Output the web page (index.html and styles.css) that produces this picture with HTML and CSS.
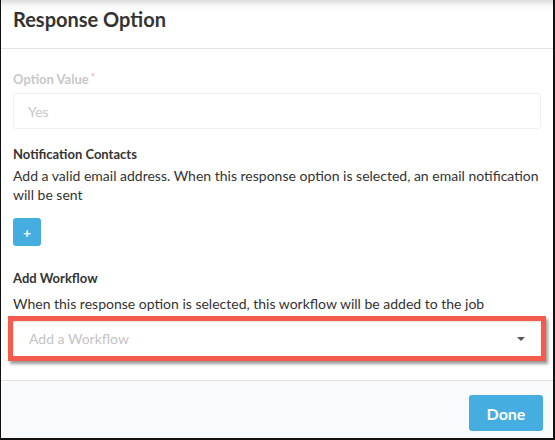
FILE: index.html
```html
<!DOCTYPE html>
<html lang="en">
<head>
<meta charset="utf-8">
<title>Response Option</title>
<link rel="stylesheet" href="styles.css">
</head>
<body>
<div class="modal">
  <header class="modal-header">
    <h2 class="modal-title">Response Option</h2>
  </header>
  <main class="modal-body">
    <div class="field">
      <label class="field-label is-disabled">Option Value<span class="req">*</span></label>
      <div class="text-input is-disabled">Yes</div>
    </div>
    <div class="field">
      <div class="section-label">Notification Contacts</div>
      <p class="section-help">Add a valid email address. When this response option is selected, an email notification will be sent</p>
      <button class="btn-add" type="button">+</button>
    </div>
    <div class="field workflow">
      <div class="section-label">Add Workflow</div>
      <p class="section-help">When this response option is selected, this workflow will be added to the job</p>
      <div class="select highlighted">
        <span class="select-placeholder">Add a Workflow</span>
        <span class="select-caret"></span>
      </div>
    </div>
  </main>
  <footer class="modal-footer">
    <button class="btn-primary" type="button">Done</button>
  </footer>
</div>
</body>
</html>
```
FILE: styles.css
```css
* { box-sizing: border-box; }

html, body {
  margin: 0;
  padding: 0;
  background: #fff;
}

body {
  font-family: Lato, "Open Sans", Arial, sans-serif;
  color: #333;
}

.modal {
  width: 555px;
  height: 440px;
  display: flex;
  flex-direction: column;
  border-left: 1px solid #111;
  border-right: 2px solid #111;
  border-bottom: 2px solid #111;
  background: #fff;
  overflow: hidden;
}

.modal-header {
  height: 49px;
  padding: 7px 12px 0;
  border-bottom: 1px solid #e3e3e3;
  background: linear-gradient(to bottom, #dcdcdc 0, #f4f4f4 5px, #fff 11px);
}

.modal-title {
  margin: 0;
  font-size: 20px;
  line-height: 24px;
  font-weight: 700;
  color: #333;
}

.modal-body {
  flex: 1;
  padding: 22px 12px 0;
}

.field-label {
  display: block;
  font-size: 13px;
  line-height: 16px;
  font-weight: 700;
}

.field-label.is-disabled { color: #c8c8c8; }

.req {
  color: #f4b4b4;
  font-size: 10px;
  vertical-align: top;
  margin-left: 2px;
  position: relative;
  top: -3px;
}

.text-input {
  margin-top: 6px;
  height: 36px;
  padding: 0 14px;
  border: 1px solid #eeeeee;
  border-radius: 3px;
  display: flex;
  align-items: center;
  font-size: 14px;
}

.text-input.is-disabled { color: #c8c8c8; }

.field + .field { margin-top: 17px; }

.section-label {
  font-size: 13px;
  line-height: 16px;
  font-weight: 700;
  color: #333;
}

.section-help {
  margin: 4px 0 0;
  font-size: 14px;
  line-height: 19px;
  color: #333;
}

.btn-add {
  margin-top: 14px;
  width: 28px;
  height: 28px;
  border: none;
  border-radius: 3px;
  background: #45ade0;
  color: #fff;
  font-family: inherit;
  font-size: 14px;
  font-weight: 700;
  padding: 0;
  display: block;
}

.field.workflow { margin-top: 24px; }

.workflow .section-help { margin-top: 8px; }

.select {
  margin-top: 8px;
  height: 35px;
  padding: 0 14px 0 16px;
  background: #fff;
  display: flex;
  align-items: center;
  justify-content: space-between;
  font-size: 14px;
}

/* annotation ring drawn around the workflow picker */
.select.highlighted {
  box-shadow:
    inset 0 1px 2px rgba(0, 0, 0, 0.12),
    0 0 0 5px #f45b4b,
    2px 3px 3px 5px rgba(0, 0, 0, 0.4);
}

.select-placeholder { color: #c4c4c4; }

.select-caret {
  width: 0;
  height: 0;
  border-left: 4px solid transparent;
  border-right: 4px solid transparent;
  border-top: 4px solid #555;
  margin-right: 2px;
}

.modal-footer {
  height: 58px;
  border-top: 1px solid #e3e3e3;
  background: #f8fafc;
  padding: 14px 10px 0;
  display: flex;
  justify-content: flex-end;
  align-items: flex-start;
}

.btn-primary {
  width: 74px;
  height: 36px;
  border: none;
  border-radius: 3px;
  background: #45ade0;
  color: #fff;
  font-family: inherit;
  font-size: 16px;
  font-weight: 700;
}
```
